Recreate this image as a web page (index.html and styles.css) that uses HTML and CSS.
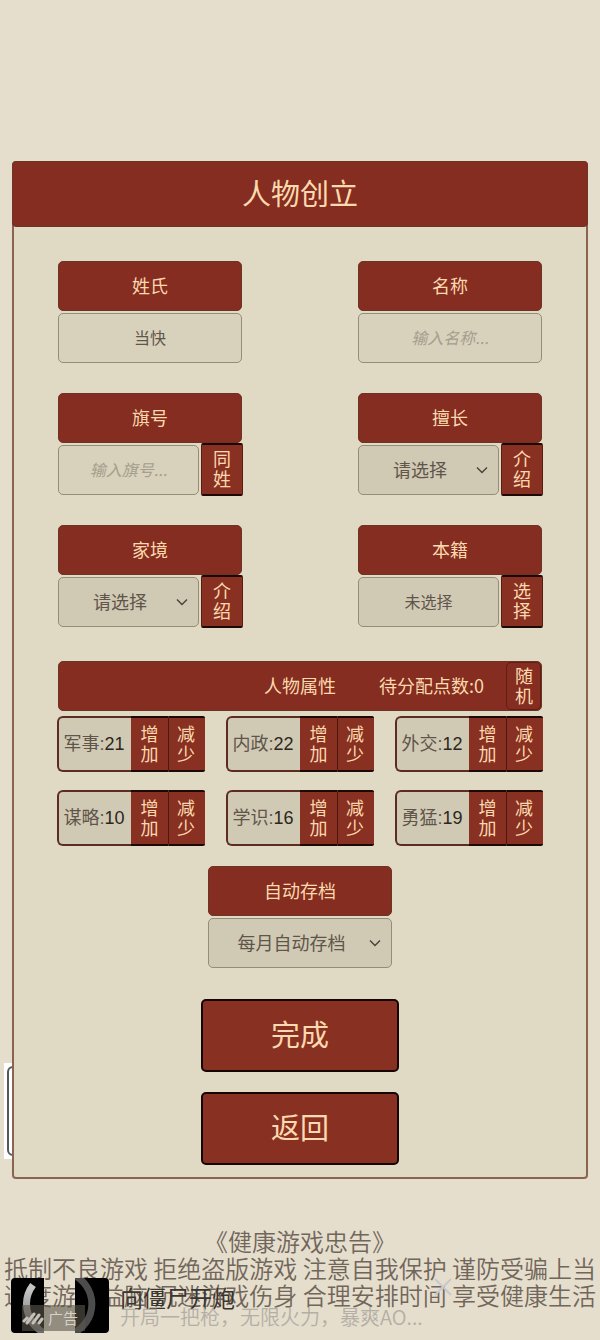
FILE: index.html
```
<!DOCTYPE html>
<html lang="zh-CN">

<head>
    <meta charset="UTF-8">
    <meta name="viewport" content="width=device-width, initial-scale=1">
    <title>人物创立</title>
    <link rel="stylesheet" href="styles.css">
</head>

<body>
    <main>
        <form class="panel">
            <div class="side_tab"></div>
            <h1>人物创立</h1>

            <div class="content">
                <section class="fields">
                    <div class="field">
                        <label for="surname">姓氏</label>
                        <div class="row">
                            <input id="surname" type="text" value="当快">
                        </div>
                    </div>
                    <div class="field">
                        <label for="name">名称</label>
                        <div class="row">
                            <input id="name" type="text" placeholder="输入名称...">
                        </div>
                    </div>
                    <div class="field">
                        <label for="banner">旗号</label>
                        <div class="row">
                            <input id="banner" type="text" placeholder="输入旗号...">
                            <button type="button" class="side">同姓</button>
                        </div>
                    </div>
                    <div class="field">
                        <label for="skill">擅长</label>
                        <div class="row">
                            <div class="select">
                                <select id="skill">
                                    <option>请选择</option>
                                </select>
                                <svg viewBox="0 0 12 8"><path d="M1 1.5 L6 6.5 L11 1.5" /></svg>
                            </div>
                            <button type="button" class="side">介绍</button>
                        </div>
                    </div>
                    <div class="field">
                        <label for="family">家境</label>
                        <div class="row">
                            <div class="select">
                                <select id="family">
                                    <option>请选择</option>
                                </select>
                                <svg viewBox="0 0 12 8"><path d="M1 1.5 L6 6.5 L11 1.5" /></svg>
                            </div>
                            <button type="button" class="side">介绍</button>
                        </div>
                    </div>
                    <div class="field">
                        <label for="origin">本籍</label>
                        <div class="row">
                            <input id="origin" class="fixed" type="text" value="未选择" readonly>
                            <button type="button" class="side">选择</button>
                        </div>
                    </div>
                </section>

                <div class="bar">
                    <h2>人物属性</h2>
                    <p>待分配点数:0</p>
                    <button type="button">随机</button>
                </div>

                <section class="stats">
                    <div class="stat">
                        <p>军事:<span>21</span></p>
                        <button type="button">增加</button>
                        <button type="button">减少</button>
                    </div>
                    <div class="stat">
                        <p>内政:<span>22</span></p>
                        <button type="button">增加</button>
                        <button type="button">减少</button>
                    </div>
                    <div class="stat">
                        <p>外交:<span>12</span></p>
                        <button type="button">增加</button>
                        <button type="button">减少</button>
                    </div>
                    <div class="stat">
                        <p>谋略:<span>10</span></p>
                        <button type="button">增加</button>
                        <button type="button">减少</button>
                    </div>
                    <div class="stat">
                        <p>学识:<span>16</span></p>
                        <button type="button">增加</button>
                        <button type="button">减少</button>
                    </div>
                    <div class="stat">
                        <p>勇猛:<span>19</span></p>
                        <button type="button">增加</button>
                        <button type="button">减少</button>
                    </div>
                </section>

                <div class="field autosave">
                    <label for="autosave">自动存档</label>
                    <div class="row">
                        <div class="select">
                            <select id="autosave">
                                <option>每月自动存档</option>
                            </select>
                            <svg viewBox="0 0 12 8"><path d="M1 1.5 L6 6.5 L11 1.5" /></svg>
                        </div>
                    </div>
                </div>

                <div class="actions">
                    <button type="button">完成</button>
                    <button type="button">返回</button>
                </div>
            </div>
        </form>
    </main>

    <footer>
        <p>《健康游戏忠告》</p>
        <p>抵制不良游戏 拒绝盗版游戏 注意自我保护 谨防受骗上当</p>
        <p>适度游戏益脑 沉迷游戏伤身 合理安排时间 享受健康生活</p>
    </footer>

    <!-- banner ad, lies over the footer -->
    <aside class="ad">
        <div class="ad_img">
            <svg viewBox="0 0 98 55">
                <defs>
                    <linearGradient id="fade" x1="0" y1="0" x2="0" y2="1">
                        <stop offset="0.1" stop-color="#c4c4c4" />
                        <stop offset="1" stop-color="#6a6a6a" />
                    </linearGradient>
                    <clipPath id="black">
                        <path d="M4 0 H33 V55 H4 Q0 55 0 51 V4 Q0 0 4 0Z M64 0 H94 Q98 0 98 4 V51 Q98 55 94 55 H64Z" />
                    </clipPath>
                </defs>
                <path d="M4 0 H33 V55 H4 Q0 55 0 51 V4 Q0 0 4 0Z M64 0 H94 Q98 0 98 4 V51 Q98 55 94 55 H64Z" />
                <g clip-path="url(#black)" fill="none" stroke-width="7">
                    <path d="M22 7 A32 32 0 0 0 36 56" stroke="url(#fade)" />
                    <path d="M60 -4 A32 32 0 0 1 60 56" stroke="#4c4c4c" />
                </g>
            </svg>
            <span class="tag">
                <svg viewBox="0 0 22 14"><path d="M2 10 L5 7 M5 12 L12 3 M11 12 L17 4 M17 12 L20 8" /></svg>广告
            </span>
        </div>
        <div class="ad_text">
            <h3>向僵尸开炮</h3>
            <p>开局一把枪，无限火力，暴爽AO...</p>
        </div>
        <button type="button" class="close" aria-label="关闭">
            <svg viewBox="0 0 18 18"><path d="M1 1 L17 17 M17 1 L1 17" /></svg>
        </button>
    </aside>
</body>

</html>
```
FILE: styles.css
```
* {
    margin: 0;
    padding: 0;
    box-sizing: border-box;
}

body {
    position: relative;
    background: #e5decd;
    font-family: "Noto Sans CJK SC", sans-serif;
    font-size: 18px;
    color: #5f554a;
}

button,
input,
select {
    font: inherit;
    color: inherit;
}

main {
    position: relative;
    z-index: 0;
    padding: 161px 12px 0;
}

/* panel */
.panel {
    position: relative;
    background: #e0dac5;
    border: 2px solid #8a6450;
    border-radius: 4px;
}

.side_tab {
    position: absolute;
    z-index: -1;
    left: -10px;
    bottom: 18px;
    width: 40px;
    height: 96px;
    background: #fff;
}

.side_tab::before {
    content: "";
    position: absolute;
    inset: 3px 0 3px 3px;
    border: 2px solid #55575f;
    border-radius: 6px;
}

h1 {
    height: 66px;
    margin: -2px -2px 0;
    line-height: 61px;
    font-size: 29px;
    font-weight: 400;
    text-align: center;
    color: #fcd9ae;
    background: #842d20;
    border: 1px solid #6b3425;
    border-radius: 4px;
}

.content {
    padding: 34px 43px 12px;
}

/* fields */
.fields {
    display: grid;
    grid-template-columns: 38% 38%;
    justify-content: space-between;
    row-gap: 29px;
    padding: 0 1px;
}

.field label {
    display: block;
    height: 50px;
    line-height: 46px;
    text-align: center;
    color: #fcd9ae;
    background: #842d20;
    border: 1px solid #6b3425;
    border-radius: 5px;
}

.row {
    display: flex;
    gap: 2px;
    height: 53px;
}

.row input,
.select {
    flex: 1;
    min-width: 0;
    margin: 2px 0 1px;
}

.row input,
.select select {
    padding-bottom: 2px;
    text-align: center;
    background: #d8d1bc;
    border: 1px solid #948d78;
    border-radius: 5px;
}

.row input {
    font-size: 16px;
}

.row input::placeholder {
    color: #a59e8c;
    font-style: italic;
}

.row .fixed,
.select select {
    background: #d0c9b4;
}

.select {
    position: relative;
}

.select select {
    appearance: none;
    width: 100%;
    height: 100%;
    padding-right: 17px;
    text-align-last: center;
}

.select svg {
    position: absolute;
    right: 11px;
    top: 21px;
    width: 12px;
    height: 8px;
    fill: none;
    stroke: #4a4238;
    stroke-width: 1.4;
    pointer-events: none;
}

.side,
.stat button,
.bar button {
    line-height: 20px;
    color: #fcd9ae;
    background: #883122;
}

.side {
    width: 42px;
    margin-right: -1px;
    padding: 0 11px 3px;
    border: 1px solid #3a120b;
    border-width: 2px 1px;
    border-color: #1c0805 #5a1d12;
    border-radius: 2px;
}

/* attributes */
.bar {
    display: grid;
    grid-template-columns: 1fr auto 1fr 35px;
    align-items: center;
    height: 50px;
    margin: 33px 1px 5px;
    color: #fcd9ae;
    background: #842d20;
    border: 1px solid #6b3425;
    border-radius: 5px;
}

.bar h2 {
    grid-column: 2;
    margin-left: 35px;
    padding-bottom: 3px;
    font-size: 18px;
    font-weight: 400;
}

.bar p {
    padding: 0 22px 3px 0;
    text-align: right;
}

.bar button {
    height: 48px;
    padding: 0 8px 2px;
    background: #842d20;
    border: 1px solid #5e1f14;
    border-radius: 5px;
}

.stats {
    display: grid;
    grid-template-columns: repeat(3, 1fr);
    gap: 18px 21px;
}

.stat {
    display: flex;
    height: 56px;
}

.stat p {
    flex: 1;
    line-height: 52px;
    padding-right: 2px;
    text-align: center;
    white-space: nowrap;
    background: #d0c9b4;
    border: 2px solid #5c2c20;
    border-right: 0;
    border-radius: 6px 0 0 6px;
    font-family: "Liberation Sans", "Noto Sans CJK SC", sans-serif;
}

.stat span {
    color: #2b2721;
}

.stat button {
    width: 37px;
    padding: 0 9px 3px;
    border: solid #1c0805;
    border-width: 2px 0;
}

.stat button:last-child {
    border-left: 1px solid #4c170e;
    padding-left: 7px;
    border-radius: 0 2px 2px 0;
}

.autosave {
    width: 38%;
    margin: 20px auto 30px;
}

.actions {
    display: grid;
    gap: 20px;
    justify-content: center;
}

.actions button {
    width: 198px;
    height: 73px;
    padding-bottom: 5px;
    font-size: 29px;
    color: #fcd9ae;
    background: #883122;
    border: 2px solid #160503;
    border-radius: 5px;
}

/* health notice */
footer {
    padding: 48px 0 32px;
    font-size: 24px;
    font-weight: 350;
    line-height: 27px;
    text-align: center;
    white-space: nowrap;
    color: #72665b;
}

/* ad */
.ad {
    position: absolute;
    z-index: 1;
    left: 11px;
    bottom: 7px;
    display: flex;
    gap: 11px;
}

.ad_img {
    position: relative;
    width: 98px;
    height: 55px;
}

.ad_img > svg {
    display: block;
}

.tag {
    position: absolute;
    left: 11px;
    bottom: 2px;
    display: flex;
    align-items: center;
    gap: 4px;
    height: 26px;
    padding-right: 7px;
    font-size: 15px;
    line-height: 26px;
    color: #d6d2c8;
    background: rgba(90, 86, 74, .6);
}

.tag svg {
    width: 22px;
    height: 14px;
    fill: none;
    stroke: #c4c0b8;
    stroke-width: 3;
    stroke-linecap: round;
}

.ad_text h3 {
    padding-top: 7px;
    font-size: 23px;
    font-weight: 400;
    line-height: 24px;
    color: #3a3530;
}

.ad_text p {
    font-size: 20px;
    font-weight: 350;
    line-height: 16px;
    white-space: nowrap;
    color: #b4afa6;
}

.close {
    width: 18px;
    height: 18px;
    background: none;
    border: 0;
}

.close svg {
    display: block;
    fill: none;
    stroke: #c6c8cf;
    stroke-width: 2;
}
```
